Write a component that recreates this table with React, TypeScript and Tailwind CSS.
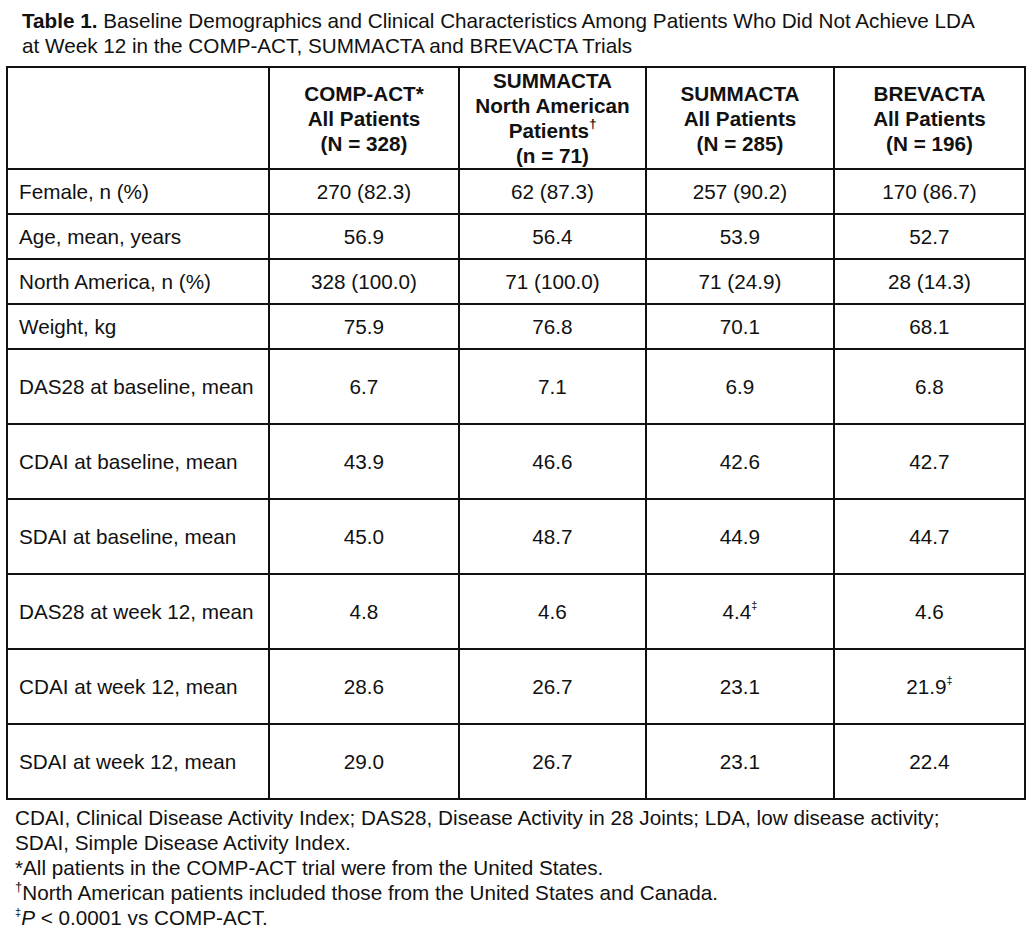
const COLS = ['w-[262px]', 'w-[190px]', 'w-[187px]', 'w-[188px]', 'w-[191px]'];

type Row = { label: string; values: React.ReactNode[]; tall?: boolean };

const dd = <sup className="text-[11px] align-[5px] leading-none">‡</sup>;

const rows: Row[] = [
  { label: 'Female, n (%)', values: ['270 (82.3)', '62 (87.3)', '257 (90.2)', '170 (86.7)'] },
  { label: 'Age, mean, years', values: ['56.9', '56.4', '53.9', '52.7'] },
  { label: 'North America, n (%)', values: ['328 (100.0)', '71 (100.0)', '71 (24.9)', '28 (14.3)'] },
  { label: 'Weight, kg', values: ['75.9', '76.8', '70.1', '68.1'] },
  { label: 'DAS28 at baseline, mean', values: ['6.7', '7.1', '6.9', '6.8'], tall: true },
  { label: 'CDAI at baseline, mean', values: ['43.9', '46.6', '42.6', '42.7'], tall: true },
  { label: 'SDAI at baseline, mean', values: ['45.0', '48.7', '44.9', '44.7'], tall: true },
  { label: 'DAS28 at week 12, mean', values: ['4.8', '4.6', <>4.4{dd}</>, '4.6'], tall: true },
  { label: 'CDAI at week 12, mean', values: ['28.6', '26.7', '23.1', <>21.9{dd}</>], tall: true },
  { label: 'SDAI at week 12, mean', values: ['29.0', '26.7', '23.1', '22.4'], tall: true },
];

export default function App() {
  return (
    <div className="w-[1027px] h-[943px] bg-white text-[#111] font-['Liberation_Sans',Arial,sans-serif]">
      <div className="pl-[22px] pt-[8px] text-[20.7px] leading-[25px] whitespace-nowrap">
        <span className="font-bold">Table 1.</span> Baseline Demographics and Clinical Characteristics Among Patients Who Did Not Achieve LDA
        <br />
        at Week 12 in the COMP-ACT, SUMMACTA and BREVACTA Trials
      </div>

      <table className="ml-[6px] mt-[8px] w-[1018px] table-fixed border-collapse border-2 border-[#111] text-[20.7px] leading-[25px]">
        <colgroup>
          {COLS.map((c) => (
            <col key={c} className={c} />
          ))}
        </colgroup>
        <thead>
          <tr className="h-[100px] font-bold">
            <th className="border-2 border-[#111]" />
            <th className="border-2 border-[#111] text-center align-middle font-bold">
              COMP-ACT*
              <br />
              All Patients
              <br />
              (N = 328)
            </th>
            <th className="border-2 border-[#111] text-center align-middle font-bold whitespace-nowrap">
              SUMMACTA
              <br />
              North American
              <br />
              Patients<sup className="text-[13px] align-[4px] leading-none">†</sup>
              <br />
              (n = 71)
            </th>
            <th className="border-2 border-[#111] text-center align-middle font-bold">
              SUMMACTA
              <br />
              All Patients
              <br />
              (N = 285)
            </th>
            <th className="border-2 border-[#111] text-center align-middle font-bold">
              BREVACTA
              <br />
              All Patients
              <br />
              (N = 196)
            </th>
          </tr>
        </thead>
        <tbody>
          {rows.map((r) => (
            <tr key={r.label} className={r.tall ? 'h-[75px]' : 'h-[45px]'}>
              <td className="border-2 border-[#111] pl-[11px] align-middle whitespace-nowrap">{r.label}</td>
              {r.values.map((v, i) => (
                <td key={i} className="border-2 border-[#111] text-center align-middle">
                  {v}
                </td>
              ))}
            </tr>
          ))}
        </tbody>
      </table>

      <div className="pl-[15px] pt-[5px] text-[20.7px] leading-[25px] whitespace-nowrap">
        <p>CDAI, Clinical Disease Activity Index; DAS28, Disease Activity in 28 Joints; LDA, low disease activity;</p>
        <p>SDAI, Simple Disease Activity Index.</p>
        <p>*All patients in the COMP-ACT trial were from the United States.</p>
        <p>
          <sup className="text-[13px] align-[3px] leading-none">†</sup>North American patients included those from the United States and Canada.
        </p>
        <p>
          <sup className="text-[11px] align-[4px] leading-none">‡</sup>
          <i>P</i> &lt; 0.0001 vs COMP-ACT.
        </p>
      </div>
    </div>
  );
}
